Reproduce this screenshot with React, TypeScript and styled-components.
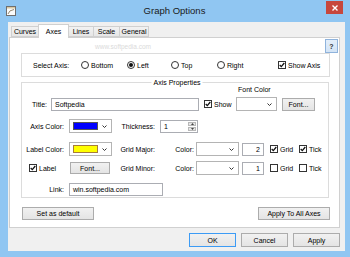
import React from "react";
import styled, { createGlobalStyle } from "styled-components";

const GlobalStyle = createGlobalStyle`
  html, body {
    margin: 0;
    padding: 0;
  }
  body {
    width: 350px;
    height: 257px;
    overflow: hidden;
    font-family: "Liberation Sans", Arial, sans-serif;
    font-size: 7px;
    line-height: 1;
    color: #000;
  }
`;

const Window = styled.div`
  position: relative;
  width: 350px;
  height: 257px;
  background: #90c6f2;
  display: flex;
  flex-direction: column;
`;

const TitleBar = styled.div`
  height: 22px;
  flex: none;
  display: grid;
  grid-template-columns: 1fr auto 1fr;
  align-items: center;
  padding: 0 7px 0 6px;
`;

const Caption = styled.div`
  font-size: 9.5px;
  color: #1a1a1a;
`;

const CloseButton = styled.div`
  justify-self: end;
  align-self: start;
  margin-top: 1px;
  width: 17px;
  height: 13px;
  background: #c7473d;
  display: flex;
  align-items: center;
  justify-content: center;
`;

const Client = styled.div`
  flex: 1;
  margin: 0 5px 6px 8px;
  background: #f0f0f0;
  display: flex;
  flex-direction: column;
  padding: 2px 5px 0 1px;
  min-height: 0;
`;

const TabStrip = styled.div`
  height: 13px;
  flex: none;
  display: flex;
  align-items: flex-end;
  padding-left: 2px;
`;

const Tab = styled.div<{ $w: number; $active?: boolean }>`
  position: relative;
  z-index: ${(p) => (p.$active ? 2 : 1)};
  width: ${(p) => p.$w}px;
  height: ${(p) => (p.$active ? 14 : 11)}px;
  margin-right: -1px;
  margin-bottom: ${(p) => (p.$active ? -1 : 0)}px;
  box-sizing: border-box;
  border: 1px solid #d0d0d0;
  border-bottom: ${(p) => (p.$active ? "none" : "1px solid #d0d0d0")};
  background: ${(p) =>
    p.$active ? "#fff" : "linear-gradient(#f2f2f2, #e6e6e6)"};
  display: flex;
  align-items: ${(p) => (p.$active ? "flex-start" : "center")};
  padding-top: ${(p) => (p.$active ? 3 : 0)}px;
  justify-content: center;
`;

const Panel = styled.div`
  position: relative;
  flex: 1;
  min-height: 0;
  background: #fff;
  border: 1px solid #d0d0d0;
  display: flex;
  flex-direction: column;
`;

const Watermark = styled.div`
  position: absolute;
  left: 85px;
  top: 6px;
  font-size: 6.5px;
  color: #dadada;
  pointer-events: none;
`;

const HelpRow = styled.div`
  display: flex;
  justify-content: flex-end;
  padding: 1px 1px 0 0;
`;

const HelpButton = styled.div`
  width: 13px;
  height: 14px;
  box-sizing: border-box;
  border: 1px solid #8fb3dc;
  background: linear-gradient(#e3eefa, #d3e4f6);
  display: flex;
  align-items: center;
  justify-content: center;
  font-size: 7px;
  font-weight: bold;
  color: #333;
`;

const Body = styled.div`
  padding: 0 9px 0 11px;
  display: flex;
  flex-direction: column;
`;

const SelectBox = styled.div`
  height: 24px;
  box-sizing: border-box;
  border: 1px solid #dcdcdc;
  display: flex;
  align-items: center;
  padding-left: 11px;
`;

const Group = styled.div`
  position: relative;
  margin: 5px 1px 0 0;
  height: 116px;
  box-sizing: border-box;
  border: 1px solid #dcdcdc;
  padding-top: 1px;
  display: flex;
  flex-direction: column;
`;

const Legend = styled.span`
  position: absolute;
  top: -5px;
  left: 50%;
  transform: translateX(-50%);
  margin-left: 2px;
  padding: 0 2px;
  background: #fff;
  line-height: 9px;
  white-space: nowrap;
`;

const Row = styled.div<{ $mt: number; $h?: number }>`
  display: flex;
  align-items: center;
  height: ${(p) => p.$h ?? 14}px;
  margin-top: ${(p) => p.$mt}px;
  flex: none;
`;

const Cell = styled.div<{ $w: number; $ml?: number; $right?: boolean; $pl?: number }>`
  width: ${(p) => p.$w}px;
  flex: none;
  box-sizing: border-box;
  margin-left: ${(p) => p.$ml ?? 0}px;
  padding-left: ${(p) => p.$pl ?? 0}px;
  padding-right: ${(p) => (p.$right ? 2 : 0)}px;
  display: flex;
  align-items: center;
  justify-content: ${(p) => (p.$right ? "flex-end" : "flex-start")};
  white-space: nowrap;
`;

const TextField = styled.div<{ $w: number; $ml?: number; $alignRight?: boolean }>`
  width: ${(p) => p.$w}px;
  height: 13px;
  flex: none;
  margin-left: ${(p) => p.$ml ?? 0}px;
  box-sizing: border-box;
  border: 1px solid #abadb3;
  background: #fff;
  display: flex;
  align-items: center;
  justify-content: ${(p) => (p.$alignRight ? "flex-end" : "flex-start")};
  padding: 0 3px;
  white-space: nowrap;
`;

const Combo = styled.div<{ $w: number; $ml?: number }>`
  width: ${(p) => p.$w}px;
  height: 14px;
  flex: none;
  margin-left: ${(p) => p.$ml ?? 0}px;
  box-sizing: border-box;
  border: 1px solid #b4b4b4;
  background: #fff;
  display: flex;
  align-items: center;
  padding: 2px 4px 2px 3px;
`;

const Swatch = styled.div<{ $color: string; $edge: string }>`
  width: 25px;
  height: 8px;
  flex: none;
  box-sizing: border-box;
  border: 1px solid ${(p) => p.$edge};
  background: ${(p) => p.$color};
`;

const ChevronBox = styled.span`
  margin-left: auto;
  display: flex;
`;

const Spinner = styled.div`
  width: 38px;
  height: 13px;
  flex: none;
  margin-left: 3px;
  box-sizing: border-box;
  border: 1px solid #abadb3;
  background: #fff;
  display: flex;
  align-items: stretch;
`;

const SpinValue = styled.div`
  flex: 1;
  display: flex;
  align-items: center;
  padding-left: 3px;
`;

const SpinButtons = styled.div`
  width: 8px;
  display: flex;
  flex-direction: column;
  gap: 1px;
  padding: 1px 1px 1px 0;
`;

const SpinArrow = styled.div`
  flex: 1;
  background: #e6e6e6;
  border: 1px solid #b8b8b8;
  display: flex;
  align-items: center;
  justify-content: center;
`;

const CheckWrap = styled.span`
  display: inline-flex;
  align-items: center;
  gap: 2px;
  white-space: nowrap;
`;

const Box = styled.span<{ $round?: boolean }>`
  width: 8px;
  height: 8px;
  flex: none;
  box-sizing: border-box;
  border: 1px solid #333;
  border-radius: ${(p) => (p.$round ? "50%" : "0")};
  background: #fff;
  display: inline-flex;
  align-items: center;
  justify-content: center;
`;

const Dot = styled.span`
  width: 4px;
  height: 4px;
  border-radius: 50%;
  background: #111;
`;

const Button = styled.div<{ $w: number; $h?: number; $default?: boolean }>`
  width: ${(p) => p.$w}px;
  height: ${(p) => p.$h ?? 13}px;
  flex: none;
  box-sizing: border-box;
  border: 1px solid ${(p) => (p.$default ? "#3c9bf5" : "#acacac")};
  background: linear-gradient(#f1f1f1, #e4e4e4);
  display: flex;
  align-items: center;
  justify-content: center;
  white-space: nowrap;
`;

const PanelButtons = styled.div`
  margin-top: 9px;
  padding-left: 1px;
  display: flex;
  justify-content: space-between;
`;

const Footer = styled.div`
  flex: none;
  display: flex;
  justify-content: flex-end;
  gap: 5px;
  margin-top: 5px;
  padding-bottom: 4px;
`;

const Chevron = () => (
  <ChevronBox>
    <svg width="5" height="3" viewBox="0 0 5 3">
      <path d="M0.5 0.5 L2.5 2.5 L4.5 0.5" stroke="#333" strokeWidth="1" fill="none" />
    </svg>
  </ChevronBox>
);

const Check = ({ checked, label }: { checked?: boolean; label: string }) => (
  <CheckWrap>
    <Box>
      {checked && (
        <svg width="6" height="6" viewBox="0 0 6 6">
          <path d="M0.7 3 L2.3 4.6 L5.3 1" stroke="#111" strokeWidth="1.3" fill="none" />
        </svg>
      )}
    </Box>
    {label}
  </CheckWrap>
);

const Radio = ({ checked, label }: { checked?: boolean; label: string }) => (
  <CheckWrap>
    <Box $round>{checked && <Dot />}</Box>
    {label}
  </CheckWrap>
);

const AppIcon = () => (
  <svg width="10" height="10" viewBox="0 0 10 10">
    <rect x="0.5" y="0.5" width="9" height="9" fill="#fbfbfb" stroke="#6f6f6f" />
    <rect x="1" y="1" width="8" height="1.5" fill="#d9c7a0" />
    <path d="M2 8 Q3 4 8 3.5" stroke="#8a7a60" strokeWidth="0.9" fill="none" />
  </svg>
);

const tabs = [
  { name: "Curves", w: 28 },
  { name: "Axes", w: 31, active: true },
  { name: "Lines", w: 26 },
  { name: "Scale", w: 27 },
  { name: "General", w: 30 },
];

const App = (): JSX.Element => {
  return (
    <>
      <GlobalStyle />
      <Window>
        <TitleBar>
          <AppIcon />
          <Caption>Graph Options</Caption>
          <CloseButton>
            <svg width="6" height="6" viewBox="0 0 6 6">
              <path d="M0.5 0.5 L5.5 5.5 M5.5 0.5 L0.5 5.5" stroke="#fff" strokeWidth="1.4" />
            </svg>
          </CloseButton>
        </TitleBar>
        <Client>
          <TabStrip>
            {tabs.map((t) => (
              <Tab key={t.name} $w={t.w} $active={t.active}>
                {t.name}
              </Tab>
            ))}
          </TabStrip>
          <Panel>
            <Watermark>www.softpedia.com</Watermark>
            <HelpRow>
              <HelpButton>?</HelpButton>
            </HelpRow>
            <Body>
              <SelectBox>
                <Cell $w={48}>Select Axis:</Cell>
                <Cell $w={46}>
                  <Radio label="Bottom" />
                </Cell>
                <Cell $w={44}>
                  <Radio checked label="Left" />
                </Cell>
                <Cell $w={46}>
                  <Radio label="Top" />
                </Cell>
                <Cell $w={61}>
                  <Radio label="Right" />
                </Cell>
                <Cell $w={50}>
                  <Check checked label="Show Axis" />
                </Cell>
              </SelectBox>

              <Group>
                <Legend>Axis Properties</Legend>
                <Row $mt={1} $h={9}>
                  <Cell $w={40} $ml={216}>
                    Font Color
                  </Cell>
                </Row>
                <Row $mt={3}>
                  <Cell $w={27} $right>
                    Title:
                  </Cell>
                  <TextField $w={148} $ml={2}>
                    Softpedia
                  </TextField>
                  <Cell $w={37} $pl={5}>
                    <Check checked label="Show" />
                  </Cell>
                  <Combo $w={41}>
                    <Chevron />
                  </Combo>
                  <Button $w={33} $h={13} style={{ marginLeft: 5 }}>
                    Font...
                  </Button>
                </Row>
                <Row $mt={8}>
                  <Cell $w={44} $right>
                    Axis Color:
                  </Cell>
                  <Combo $w={43} $ml={3}>
                    <Swatch $color="#0000ff" $edge="#555" />
                    <Chevron />
                  </Combo>
                  <Cell $w={45} $right>
                    Thickness:
                  </Cell>
                  <Spinner>
                    <SpinValue>1</SpinValue>
                    <SpinButtons>
                      <SpinArrow>
                        <svg width="3" height="2" viewBox="0 0 3 2">
                          <path d="M0 2 L1.5 0 L3 2 Z" fill="#444" />
                        </svg>
                      </SpinArrow>
                      <SpinArrow>
                        <svg width="3" height="2" viewBox="0 0 3 2">
                          <path d="M0 0 L1.5 2 L3 0 Z" fill="#444" />
                        </svg>
                      </SpinArrow>
                    </SpinButtons>
                  </Spinner>
                </Row>
                <Row $mt={9}>
                  <Cell $w={44} $right>
                    Label Color:
                  </Cell>
                  <Combo $w={43} $ml={3}>
                    <Swatch $color="#ffff00" $edge="#a67c3c" />
                    <Chevron />
                  </Combo>
                  <Cell $w={45} $right>
                    Grid Major:
                  </Cell>
                  <Cell $w={39} $right>
                    Color:
                  </Cell>
                  <Combo $w={43}>
                    <Chevron />
                  </Combo>
                  <TextField $w={22} $ml={3} $alignRight>
                    2
                  </TextField>
                  <Cell $w={29} $ml={6}>
                    <Check checked label="Grid" />
                  </Cell>
                  <Cell $w={24}>
                    <Check checked label="Tick" />
                  </Cell>
                </Row>
                <Row $mt={5}>
                  <Cell $w={44} $pl={7}>
                    <Check checked label="Label" />
                  </Cell>
                  <Cell $w={46} $pl={4}>
                    <Button $w={40} $h={12}>
                      Font...
                    </Button>
                  </Cell>
                  <Cell $w={45} $right>
                    Grid Minor:
                  </Cell>
                  <Cell $w={39} $right>
                    Color:
                  </Cell>
                  <Combo $w={43}>
                    <Chevron />
                  </Combo>
                  <TextField $w={22} $ml={3} $alignRight>
                    1
                  </TextField>
                  <Cell $w={29} $ml={6}>
                    <Check label="Grid" />
                  </Cell>
                  <Cell $w={24}>
                    <Check label="Tick" />
                  </Cell>
                </Row>
                <Row $mt={7}>
                  <Cell $w={44} $right>
                    Link:
                  </Cell>
                  <TextField $w={94} $ml={3}>
                    win.softpedia.com
                  </TextField>
                </Row>
              </Group>

              <PanelButtons>
                <Button $w={72}>Set as default</Button>
                <Button $w={72}>Apply To All Axes</Button>
              </PanelButtons>
            </Body>
          </Panel>
          <Footer>
            <Button $w={47} $h={14} $default>
              OK
            </Button>
            <Button $w={47} $h={14}>
              Cancel
            </Button>
            <Button $w={47} $h={14}>
              Apply
            </Button>
          </Footer>
        </Client>
      </Window>
    </>
  );
};

export default App;
